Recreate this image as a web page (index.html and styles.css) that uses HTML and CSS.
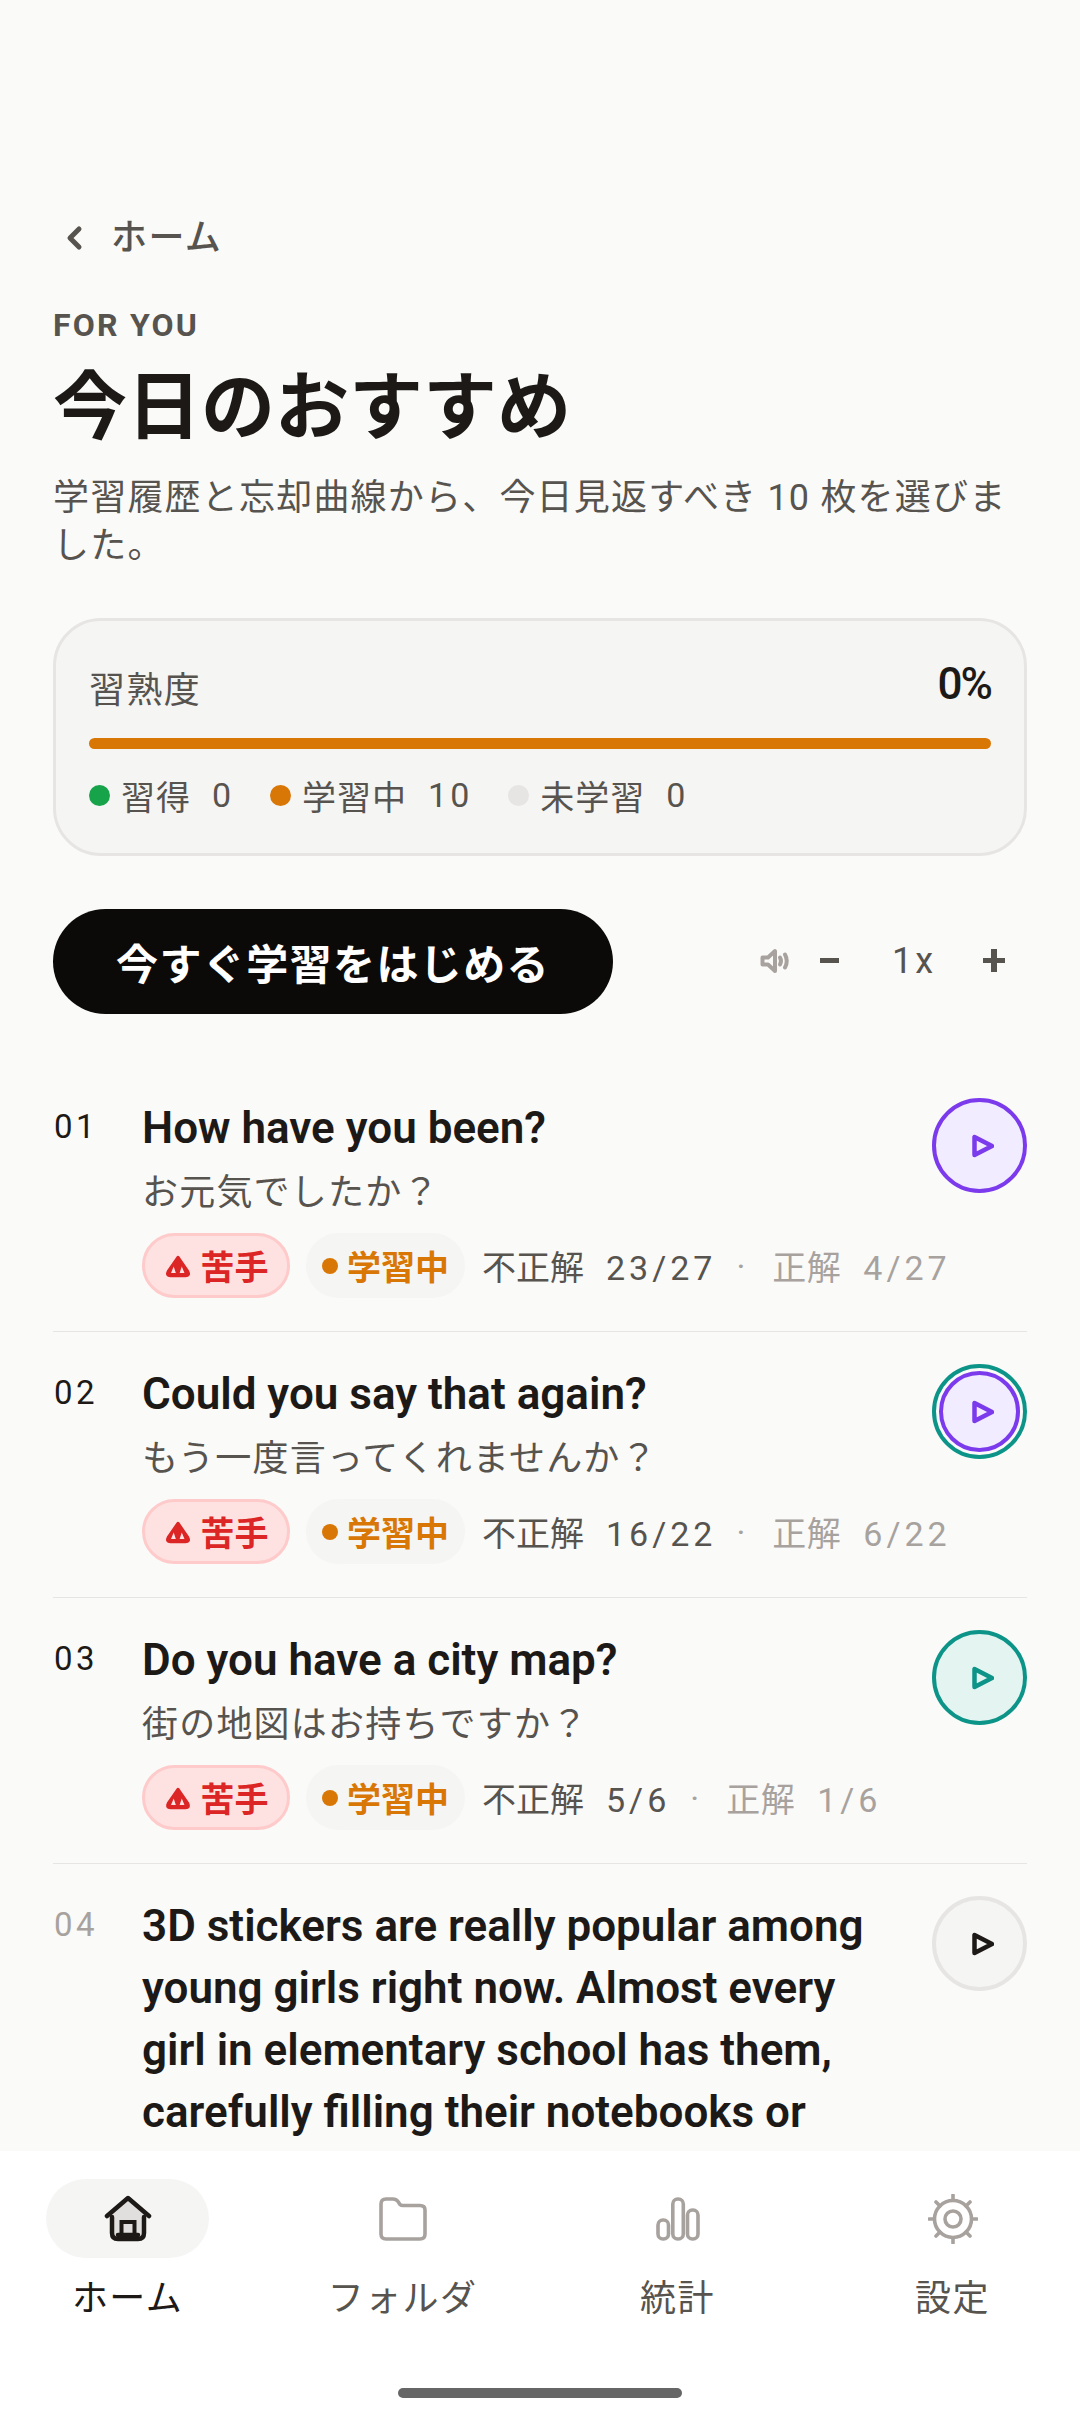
FILE: index.html
```html
<!DOCTYPE html>
<html lang="ja">
<head>
<meta charset="utf-8">
<title>今日のおすすめ</title>
<link rel="stylesheet" href="styles.css">
</head>
<body>
<main class="main">
  <div class="back">
    <svg class="back-icon" viewBox="0 0 18 26"><path d="M14 4 L5 13 L14 22"/></svg>
    <span>ホーム</span>
  </div>
  <div class="eyebrow">FOR YOU</div>
  <h1 class="title">今日のおすすめ</h1>
  <p class="lead">学習履歴と忘却曲線から、今日見返すべき 10 枚を選びました。</p>

  <section class="card">
    <div class="card-head"><span class="card-label">習熟度</span><span class="card-value">0%</span></div>
    <div class="bar"></div>
    <div class="legend">
      <span class="legend-item"><i class="dot dot-green"></i>習得<b class="legend-num">0</b></span>
      <span class="legend-item"><i class="dot dot-orange"></i>学習中<b class="legend-num">10</b></span>
      <span class="legend-item"><i class="dot dot-grey"></i>未学習<b class="legend-num">0</b></span>
    </div>
  </section>

  <div class="actions">
    <button class="start">今すぐ学習をはじめる</button>
    <div class="controls">
      <svg class="speaker" viewBox="0 0 30 26"><path class="spk-body" d="M2.500 9.500 H8 L15 3 V23 L8 16.500 H2.500 Z"/><path class="spk-wave" d="M20 9.500 Q22 13 20 16.500"/><path class="spk-wave" d="M25 6.500 Q28.500 13 25 19.500"/></svg>
      <span class="minus"></span>
      <span class="speed">1x</span>
      <span class="plus"></span>
    </div>
  </div>

  <ol class="list">
    <li class="row">
      <span class="num">01</span>
      <div class="body">
        <div class="en">How have you been?</div>
        <div class="ja">お元気でしたか？</div>
        <div class="meta">
          <span class="tag-weak"><svg class="warn" viewBox="0 0 26 24"><path class="warn-bg" d="M13 4 L22 17 Q24 21 20 21 H6 Q2 21 4 17 Z"/><path class="warn-mark" d="M9 12.500 L6.500 18.500 H11 Z M16.500 12.500 L14.500 18.500 H19 Z"/></svg>苦手</span>
          <span class="tag-status"><i class="tag-dot"></i>学習中</span>
          <span class="stat">不正解<span class="stat-num">23/27</span></span>
          <span class="sep">·</span>
          <span class="stat stat-soft">正解<span class="stat-num">4/27</span></span>
        </div>
      </div>
      <button class="play play-violet"><svg class="tri" viewBox="0 0 22 24"><path d="M2.500 3 V21 L20 12 Z"/></svg></button>
    </li>
    <li class="row">
      <span class="num">02</span>
      <div class="body">
        <div class="en">Could you say that again?</div>
        <div class="ja">もう一度言ってくれませんか？</div>
        <div class="meta">
          <span class="tag-weak"><svg class="warn" viewBox="0 0 26 24"><path class="warn-bg" d="M13 4 L22 17 Q24 21 20 21 H6 Q2 21 4 17 Z"/><path class="warn-mark" d="M9 12.500 L6.500 18.500 H11 Z M16.500 12.500 L14.500 18.500 H19 Z"/></svg>苦手</span>
          <span class="tag-status"><i class="tag-dot"></i>学習中</span>
          <span class="stat">不正解<span class="stat-num">16/22</span></span>
          <span class="sep">·</span>
          <span class="stat stat-soft">正解<span class="stat-num">6/22</span></span>
        </div>
      </div>
      <button class="play play-dual"><span class="play-ring"><svg class="tri" viewBox="0 0 22 24"><path d="M2.500 3 V21 L20 12 Z"/></svg></span></button>
    </li>
    <li class="row">
      <span class="num">03</span>
      <div class="body">
        <div class="en">Do you have a city map?</div>
        <div class="ja">街の地図はお持ちですか？</div>
        <div class="meta">
          <span class="tag-weak"><svg class="warn" viewBox="0 0 26 24"><path class="warn-bg" d="M13 4 L22 17 Q24 21 20 21 H6 Q2 21 4 17 Z"/><path class="warn-mark" d="M9 12.500 L6.500 18.500 H11 Z M16.500 12.500 L14.500 18.500 H19 Z"/></svg>苦手</span>
          <span class="tag-status"><i class="tag-dot"></i>学習中</span>
          <span class="stat">不正解<span class="stat-num">5/6</span></span>
          <span class="sep">·</span>
          <span class="stat stat-soft">正解<span class="stat-num">1/6</span></span>
        </div>
      </div>
      <button class="play play-teal"><svg class="tri" viewBox="0 0 22 24"><path d="M2.500 3 V21 L20 12 Z"/></svg></button>
    </li>
    <li class="row row-last">
      <span class="num num-soft">04</span>
      <div class="body">
        <div class="en">3D stickers are really popular among young girls right now. Almost every girl in elementary school has them, carefully filling their notebooks or</div>
      </div>
      <button class="play play-grey"><svg class="tri" viewBox="0 0 22 24"><path d="M2.500 3 V21 L20 12 Z"/></svg></button>
    </li>
  </ol>
</main>

<nav class="nav">
  <div class="nav-items">
    <div class="nav-item nav-active">
      <span class="nav-icon">
        <svg class="ic-home" viewBox="0 0 48 48">
          <path class="home-fill" d="M7 20 L24 5 L41 20 V42 H7 Z"/>
          <path class="home-door" d="M17.500 41 V27 H30.500 V41"/>
          <path class="home-roof" d="M3 21 L24 3 L45 21"/>
          <path class="home-wall" d="M8 22 V38 Q8 44 14 44 H34 Q40 44 40 38 V22"/>
          <path class="home-sill" d="M14 40 H34"/>
        </svg>
      </span>
      <span class="nav-label">ホーム</span>
    </div>
    <div class="nav-item">
      <span class="nav-icon">
        <svg class="ic-line" viewBox="0 0 48 44"><path d="M2 7 Q2 2 7 2 H14 Q17 2 19 4.500 L21 7.500 Q22 8.500 24 8.500 H41 Q46 8.500 46 13 V37 Q46 42 41 42 H7 Q2 42 2 37 Z"/></svg>
      </span>
      <span class="nav-label">フォルダ</span>
    </div>
    <div class="nav-item">
      <span class="nav-icon">
        <svg class="ic-line" viewBox="0 0 44 44"><rect x="2" y="23" width="10.500" height="19" rx="5"/><rect x="16.800" y="2" width="10.500" height="40" rx="5"/><rect x="31.500" y="13" width="10.500" height="29" rx="5"/></svg>
      </span>
      <span class="nav-label">統計</span>
    </div>
    <div class="nav-item">
      <span class="nav-icon">
        <svg class="ic-line ic-gear" viewBox="0 0 50 50"><circle cx="25" cy="25" r="18.500"/><circle cx="25" cy="25" r="8"/><path d="M25 1 V6 M25 44 V49 M1 25 H6 M44 25 H49 M8 8 L12 12 M38 38 L42 42 M42 8 L38 12 M12 38 L8 42"/></svg>
      </span>
      <span class="nav-label">設定</span>
    </div>
  </div>
  <div class="home-bar"></div>
</nav>
</body>
</html>
```

FILE: styles.css
```css
* { box-sizing: border-box; }
html, body { margin: 0; padding: 0; }
body {
  width: 1080px;
  height: 2424px;
  overflow: hidden;
  display: flex;
  flex-direction: column;
  background: #fafaf9;
  color: #1c1917;
  font-family: Roboto, "Noto Sans CJK JP", sans-serif;
}
.main {
  height: 2151px;
  flex: none;
  overflow: hidden;
  padding: 209px 53px 0;
}

/* header */
.back {
  height: 58px;
  display: flex;
  align-items: center;
  gap: 28px;
  padding-left: 12px;
  color: #57534e;
  font-size: 36px;
  font-weight: 500;
  letter-spacing: 1.400px;
  line-height: 58px;
}
.back-icon { width: 18px; height: 26px; fill: none; stroke: #57534e; stroke-width: 5; stroke-linecap: round; stroke-linejoin: round; }
.eyebrow {
  margin-top: 37px;
  height: 42px;
  line-height: 42px;
  font-size: 32px;
  font-weight: 700;
  letter-spacing: 2.200px;
  color: #57534e;
}
.title {
  margin: 14px 0 0;
  font-size: 74px;
  line-height: 96px;
  font-weight: 700;
  color: #1c1917;
}
.lead {
  margin: 18px 0 0;
  font-size: 36px;
  line-height: 48px;
  letter-spacing: 1.200px;
  color: #57534e;
}

/* mastery card */
.card {
  margin-top: 48px;
  height: 238px;
  padding: 38px 33px 0;
  border: 3px solid #e7e5e4;
  border-radius: 48px;
  background: #f5f5f4;
}
.card-head { display: flex; justify-content: space-between; align-items: center; height: 56px; }
.card-label { font-size: 36px; letter-spacing: 1.400px; color: #57534e; }
.card-value { font-size: 44px; font-weight: 500; letter-spacing: -2px; color: #1c1917; margin-top: -6px; }
.bar { margin-top: 23px; height: 11px; border-radius: 6px; background: #d97706; }
.legend { display: flex; gap: 36px; margin-top: 22px; height: 48px; align-items: center; }
.legend-item { display: flex; align-items: center; font-size: 34px; letter-spacing: 1px; color: #57534e; }
.legend-num { font-weight: 400; margin-left: 21px; letter-spacing: 3px; }
.dot { width: 21px; height: 21px; border-radius: 50%; margin-right: 11px; flex: none; }
.dot-green { background: #16a34a; }
.dot-orange { background: #d97706; }
.dot-grey { background: #e7e5e4; }

/* actions */
.actions { margin-top: 53px; display: flex; align-items: center; justify-content: space-between; }
.start {
  width: 560px;
  height: 105px;
  border: 0;
  border-radius: 53px;
  background: #0c0a09;
  color: #fff;
  font-family: inherit;
  font-size: 42px;
  font-weight: 700;
  letter-spacing: 1.400px;
}
.controls { display: flex; align-items: center; width: 268px; padding-left: 1px; margin-top: -2px; }
.speaker { width: 30px; height: 26px; fill: none; stroke: #a8a29e; stroke-width: 4; stroke-linecap: round; stroke-linejoin: round; flex: none; }
.minus { flex: none; width: 19px; height: 5px; margin-left: 30px; background: #57534e; }
.speed { flex: none; margin-left: 53px; width: 40px; font-size: 36px; letter-spacing: 3px; color: #57534e; white-space: nowrap; }
.plus {
  flex: none;
  width: 22px;
  height: 23px;
  margin-left: 51px;
  background: linear-gradient(#57534e, #57534e) center / 100% 5px no-repeat,
              linear-gradient(#57534e, #57534e) center / 6px 100% no-repeat;
}

/* list */
.list { list-style: none; margin: 52px 0 0; padding: 0; }
.row {
  display: flex;
  align-items: flex-start;
  height: 266px;
  padding-top: 31px;
  border-bottom: 1px solid #e7e5e4;
}
.row-last { height: auto; border-bottom: 0; }
.num { flex: none; width: 89px; padding-left: 1px; font-size: 33px; line-height: 60px; letter-spacing: 3.500px; color: #1c1917; }
.num-soft { color: #a8a29e; }
.body { flex: 1; min-width: 0; padding-right: 24px; }
.en { font-size: 44px; line-height: 62px; font-weight: 600; color: #1c1917; }
.ja { margin-top: 10px; font-size: 36px; line-height: 48px; letter-spacing: 1.200px; color: #57534e; }
.meta { margin-top: 16px; display: flex; align-items: center; height: 65px; white-space: nowrap; }
.tag-weak {
  flex: none;
  display: flex;
  align-items: center;
  justify-content: center;
  gap: 9px;
  width: 148px;
  height: 65px;
  border: 3px solid #fecaca;
  border-radius: 33px;
  background: #fee2e2;
  color: #dc2626;
  font-size: 34px;
  font-weight: 700;
}
.warn { width: 28px; height: 26px; flex: none; }
.warn-bg { fill: #dc2626; stroke: #dc2626; stroke-width: 3; stroke-linejoin: round; }
.warn-mark { fill: #fee2e2; }
.tag-status {
  flex: none;
  display: flex;
  align-items: center;
  gap: 9px;
  margin-left: 16px;
  padding-left: 16px;
  width: 159px;
  height: 65px;
  border-radius: 33px;
  background: #f5f5f4;
  color: #d97706;
  font-size: 34px;
  font-weight: 700;
}
.tag-dot { width: 16px; height: 16px; border-radius: 50%; background: #d97706; flex: none; }
.stat { flex: none; margin-left: 17px; font-size: 34px; color: #57534e; }
.stat-num { margin-left: 22px; letter-spacing: 4px; }
.sep { flex: none; margin-left: 20px; font-size: 34px; color: #a8a29e; }
.stat-soft { color: #a8a29e; margin-left: 27px; letter-spacing: 0.500px; }

/* play buttons */
.play {
  flex: none;
  width: 95px;
  height: 95px;
  margin-top: 1px;
  padding: 0;
  display: flex;
  align-items: center;
  justify-content: center;
  border-radius: 50%;
  border: 4px solid;
  background: none;
}
.tri { width: 22px; height: 24px; margin-left: 7px; fill: none; stroke: currentColor; stroke-width: 4.500; stroke-linejoin: round; }
.play-violet { border-color: #7c3aed; background: #f1ecff; color: #7c3aed; }
.play-teal { border-color: #0d9488; background: #e4f4f1; color: #0d9488; }
.play-grey { border-color: #e7e5e4; background: #f5f5f4; color: #1c1917; }
.play-dual { border-color: #0d9488; padding: 3px; }
.play-ring {
  width: 100%;
  height: 100%;
  display: flex;
  align-items: center;
  justify-content: center;
  border: 4px solid #7c3aed;
  border-radius: 50%;
  background: #f1ecff;
  color: #7c3aed;
}

/* bottom nav */
.nav { flex: 1; background: #fff; display: flex; flex-direction: column; align-items: center; }
.nav-items { width: 100%; padding: 28px 46px 0; display: flex; justify-content: space-between; }
.nav-item { width: 163px; display: flex; flex-direction: column; align-items: center; }
.nav-icon { width: 163px; height: 79px; border-radius: 40px; display: flex; align-items: center; justify-content: center; }
.nav-active .nav-icon { background: #f5f5f4; }
.nav-label { margin-top: 17px; height: 48px; line-height: 48px; font-size: 36px; letter-spacing: 1.400px; white-space: nowrap; color: #57534e; }
.nav-active .nav-label { color: #1c1917; }
.ic-home { width: 48px; height: 48px; }
.home-fill { fill: #e0dfdd; }
.home-door { fill: none; stroke: #1c1917; stroke-width: 4; }
.home-roof, .home-wall, .home-sill { fill: none; stroke: #1c1917; stroke-width: 4.500; stroke-linecap: round; stroke-linejoin: round; }
.ic-line { height: 44px; width: 48px; fill: none; stroke: #a8a29e; stroke-width: 3.600; stroke-linecap: round; stroke-linejoin: round; }
.ic-gear { width: 50px; height: 50px; }
.home-bar { margin-top: 65px; width: 284px; height: 10px; border-radius: 5px; background: #666; }
```
